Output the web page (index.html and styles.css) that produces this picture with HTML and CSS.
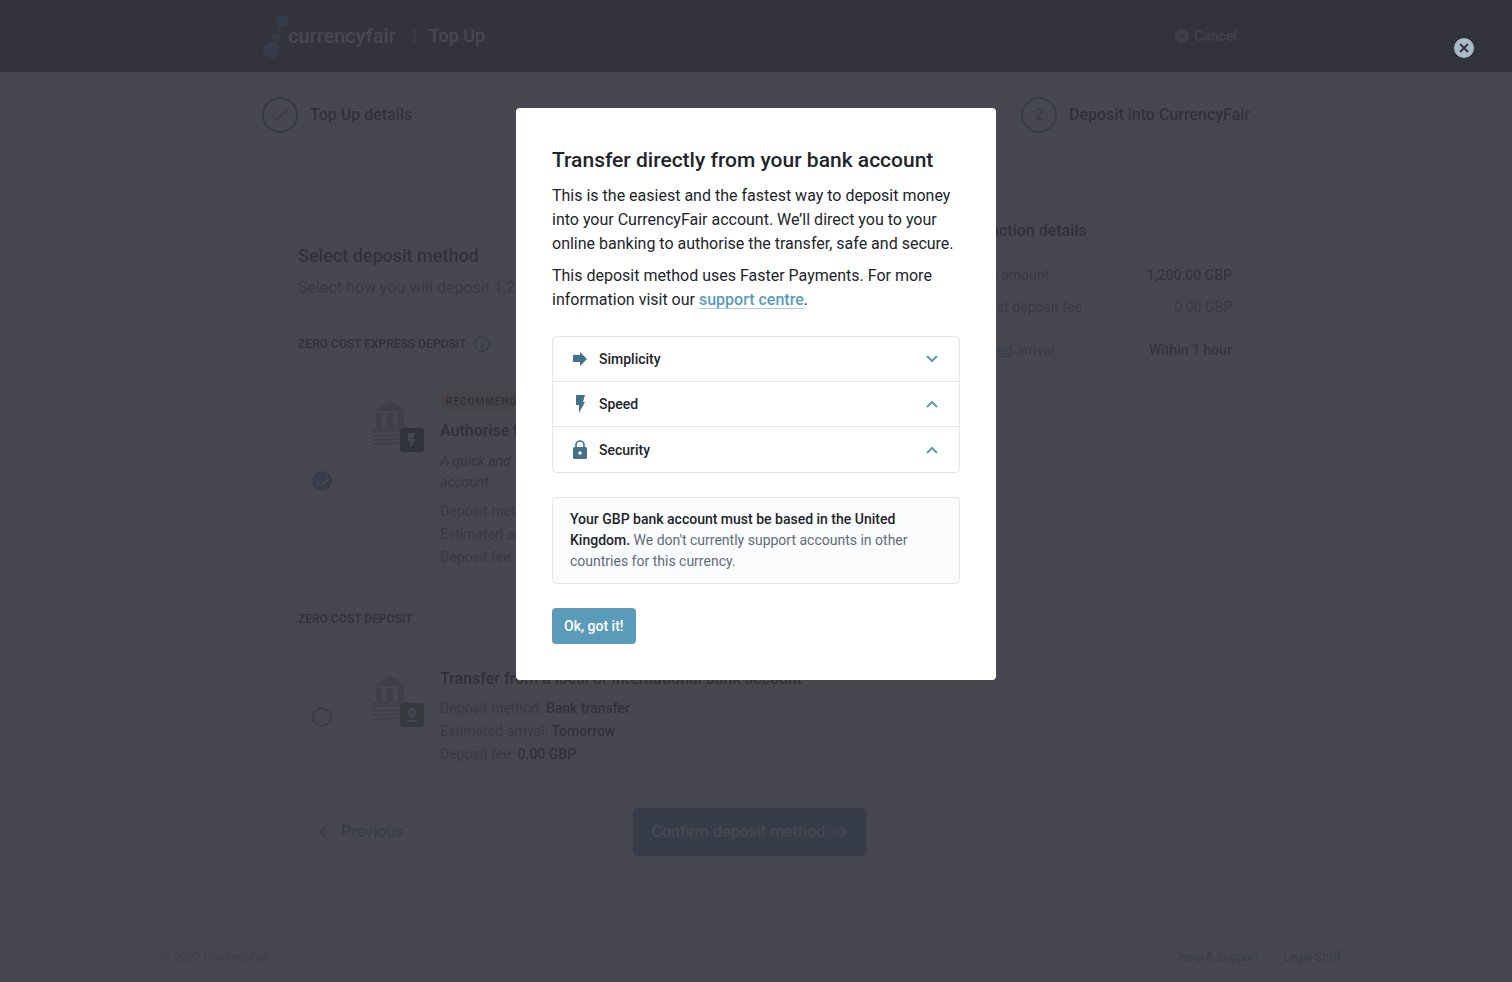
FILE: index.html
```html
<!DOCTYPE html>
<html lang="en">
<head>
<meta charset="UTF-8">
<meta name="viewport" content="width=device-width, initial-scale=1.0">
<title>Top Up - CurrencyFair</title>
<link rel="stylesheet" href="styles.css">
</head>
<body>
<div class="page">
  <!-- Top bar -->
  <header class="topbar">
    <div class="container topbar-inner">
      <a class="logo" href="#" aria-label="currencyfair">
        <svg width="26" height="46" viewBox="0 0 26 46" fill="#5b9bba">
          <circle cx="20" cy="8" r="6"/>
          <circle cx="17" cy="17" r="2"/>
          <circle cx="14" cy="24" r="4"/>
          <circle cx="9" cy="37" r="8"/>
        </svg>
        <span>currencyfair</span>
      </a>
      <span class="topbar-title">Top Up</span>
      <button class="cancel-btn" type="button">
        <svg width="14" height="14" viewBox="0 0 20 20">
          <circle cx="10" cy="10" r="10" fill="#a9bccb"/>
          <path d="M6 6l8 8M14 6l-8 8" stroke="#353841" stroke-width="2"/>
        </svg>
        Cancel
      </button>
    </div>
  </header>

  <!-- Steps -->
  <ol class="container steps">
    <li class="step step-done">
      <span class="step-mark">
        <svg width="18" height="16" viewBox="0 0 18 16" fill="none" stroke="currentColor" stroke-width="1.500"><path d="M2 9l4 4L16 2"/></svg>
      </span>
      Top Up details
    </li>
    <li class="step-line"></li>
    <li class="step"><span class="step-mark">2</span>Deposit into CurrencyFair</li>
  </ol>

  <main class="container content">
    <form class="panel">
      <h1>Select deposit method</h1>
      <p class="lead">Select how you will deposit 1,200.00 GBP</p>

      <h2>Zero cost express deposit
        <svg width="16" height="16" viewBox="0 0 16 16" fill="none" stroke="#5b9bba" stroke-width="1.500"><circle cx="8" cy="8" r="7"/><path d="M8 7v5M8 4v1.500M6.500 7H8M6 12h4"/></svg>
      </h2>
      <label class="option">
        <span class="option-pick"><input type="radio" name="method" checked></span>
        <span class="option-art">
          <svg width="60" height="60" viewBox="0 0 60 60">
            <path d="M2 2l46-1 3 55-44 3z" fill="#fff" stroke="#dfe3e6"/>
            <g fill="#9fb4c0">
              <path d="M8 18L25 8l17 10z"/>
              <path d="M11 20h6v14h-6zM22 20h6v14h-6zM33 19h6v14h-6zM8 34l34-1v2l-34 1z"/>
              <path d="M8 37l34-1v2l-34 1zM7 42l34-1v2l-34 1zM7 46l34-1v2l-34 1zM7 50l34-1v2l-34 1z"/>
            </g>
            <rect x="35" y="35" width="24" height="24" rx="3" fill="#16324a"/>
            <path d="M43 40h7l-2 6h3l-6 9v-7h-2z" fill="#dbe9f1"/>
          </svg>
        </span>
        <span class="option-text">
          <span class="badge">Recommended</span>
          <strong class="option-title">Authorise transfer from your bank account</strong>
          <em>A quick and secure way to transfer money from your bank account</em>
          <span class="meta">Deposit method: <b>Open banking</b></span>
          <span class="meta">Estimated arrival: <b>Within 1 hour</b></span>
          <span class="meta">Deposit fee: <b>0.00 GBP</b></span>
        </span>
      </label>

      <h2>Zero cost deposit</h2>
      <label class="option">
        <span class="option-pick"><input type="radio" name="method"></span>
        <span class="option-art">
          <svg width="60" height="60" viewBox="0 0 60 60">
            <path d="M2 2l46-1 3 55-44 3z" fill="#fff" stroke="#dfe3e6"/>
            <g fill="#9fb4c0">
              <path d="M8 18L25 8l17 10z"/>
              <path d="M11 20h6v14h-6zM22 20h6v14h-6zM33 19h6v14h-6zM8 34l34-1v2l-34 1z"/>
              <path d="M8 37l34-1v2l-34 1zM7 42l34-1v2l-34 1zM7 46l34-1v2l-34 1zM7 50l34-1v2l-34 1z"/>
            </g>
            <rect x="35" y="35" width="24" height="24" rx="3" fill="#2c7a4b"/>
            <path d="M47 40a4.500 4.500 0 0 0-4.500 4.500c0 3 4.500 7 4.500 7s4.500-4 4.500-7A4.500 4.500 0 0 0 47 40zm0 6a1.500 1.500 0 1 1 0-3 1.500 1.500 0 0 1 0 3zM42 52h10v2H42z" fill="#dbe9f1"/>
          </svg>
        </span>
        <span class="option-text">
          <strong class="option-title">Transfer from a local or international bank account</strong>
          <span class="meta">Deposit method: <b>Bank transfer</b></span>
          <span class="meta">Estimated arrival: <b>Tomorrow</b></span>
          <span class="meta">Deposit fee: <b>0.00 GBP</b></span>
        </span>
      </label>

      <div class="actions">
        <button class="btn-previous" type="button">
          <svg width="14" height="14" viewBox="0 0 14 14" fill="none" stroke="currentColor" stroke-width="1.500"><path d="M13 7H2M7 1L1 7l6 6"/></svg>
          Previous
        </button>
        <button class="btn-confirm" type="button">
          Confirm deposit method
          <svg width="14" height="14" viewBox="0 0 14 14" fill="none" stroke="currentColor" stroke-width="1.500"><path d="M1 7h11M7 1l6 6-6 6"/></svg>
        </button>
      </div>
    </form>

    <aside class="summary">
      <h3>Transaction details</h3>
      <dl>
        <div><dt>Deposit amount</dt><dd class="strong">1,200.00 GBP</dd></div>
        <div><dt>Zero cost deposit fee</dt><dd>0.00 GBP</dd></div>
      </dl>
      <dl>
        <div><dt><a href="#">Estimated</a> arrival</dt><dd class="strong">Within 1 hour</dd></div>
      </dl>
    </aside>
  </main>

  <footer class="footer">
    <span>© 2022 CurrencyFair</span>
    <nav><a href="#">Help &amp; Support</a><a href="#">Legal Stuff</a></nav>
  </footer>
</div>

<!-- Modal -->
<div class="overlay">
  <button class="close-btn" type="button" aria-label="Close">
    <svg width="20" height="20" viewBox="0 0 20 20">
      <circle cx="10" cy="10" r="10" fill="#a9bccb"/>
      <path d="M6 6l8 8M14 6l-8 8" stroke="#33333c" stroke-width="2"/>
    </svg>
  </button>
  <div class="modal" role="dialog" aria-labelledby="modalTitle">
    <h2 id="modalTitle">Transfer directly from your bank account</h2>
    <p>This is the easiest and the fastest way to deposit money into your CurrencyFair account. We’ll direct you to your online banking to authorise the transfer, safe and secure.</p>
    <p>This deposit method uses Faster Payments. For more information visit our <a href="#">support centre</a>.</p>

    <div class="accordion">
      <button type="button">
        <svg width="18" height="20" viewBox="0 0 18 20" fill="#44728a"><path d="M2 6h7V3l7 7-7 7v-4H2z"/></svg>
        <span>Simplicity</span>
        <svg width="12" height="8" viewBox="0 0 12 8" fill="none" stroke="#5b9bba" stroke-width="2"><path d="M1 1l5 5 5-5"/></svg>
      </button>
      <button type="button">
        <svg width="18" height="20" viewBox="0 0 18 20" fill="#44728a"><path d="M5 1h9l-2 7h2L8 19v-8H5z"/></svg>
        <span>Speed</span>
        <svg width="12" height="8" viewBox="0 0 12 8" fill="none" stroke="#5b9bba" stroke-width="2"><path d="M1 7l5-5 5 5"/></svg>
      </button>
      <button type="button">
        <svg width="18" height="20" viewBox="0 0 18 20"><path d="M5 8V5a4 4 0 0 1 8 0v3" fill="none" stroke="#44728a" stroke-width="1.600"/><rect x="2" y="7" width="14" height="12" rx="1.500" fill="#44728a"/><circle cx="9" cy="13" r="1.700" fill="#fff"/></svg>
        <span>Security</span>
        <svg width="12" height="8" viewBox="0 0 12 8" fill="none" stroke="#5b9bba" stroke-width="2"><path d="M1 7l5-5 5 5"/></svg>
      </button>
    </div>

    <div class="note"><b>Your GBP bank account must be based in the United Kingdom.</b> We don't currently support accounts in other countries for this currency.</div>

    <button class="ok-btn" type="button">Ok, got it!</button>
  </div>
</div>
</body>
</html>
```
FILE: styles.css
```css
* { box-sizing:border-box; }

body {
  margin:0;
  background:#fff;
  color:#212529;
  font-family:Roboto, "Liberation Sans", sans-serif;
  font-size:14px;
  line-height:24px;
}
h1, h2, h3, p, dl, dd, ol {
  margin:0;
  padding:0;
}
h1, h2, h3, b, strong { font-weight:500; }
button {
  font:inherit;
  font-weight:500;
  cursor:pointer;
}
svg { flex-shrink:0; }

.page {
  display:flex;
  flex-direction:column;
  min-height:100vh;
}
.container {
  width:100%;
  max-width:988px;
  margin:0 auto;
}

/* Top bar */
.topbar {
  background:#353540;
  color:#fff;
}
.topbar-inner {
  display:flex;
  align-items:center;
  height:72px;
}
.logo {
  display:flex;
  align-items:center;
  color:#fff;
  font-size:20px;
  font-weight:500;
  text-decoration:none;
}
.topbar-title {
  margin-left:18px;
  padding-left:14px;
  border-left:1px solid #ccc;
  font-size:18px;
  font-weight:500;
  line-height:16px;
}
.cancel-btn {
  display:flex;
  align-items:center;
  gap:5px;
  height:36px;
  margin-left:auto;
  padding:0 12px;
  background:none;
  border:1px solid #555560;
  border-radius:4px;
  color:#c4c7cc;
}

/* Steps */
.steps {
  display:flex;
  align-items:center;
  gap:12px;
  margin-top:25px;
  list-style:none;
  font-size:16px;
  font-weight:500;
}
.step {
  display:flex;
  align-items:center;
  gap:12px;
}
.step-mark {
  display:flex;
  align-items:center;
  justify-content:center;
  width:36px;
  height:36px;
  border:2px solid #5b9bba;
  border-radius:50%;
  color:#5b9bba;
}
.step-done .step-mark {
  border-color:#3f9075;
  color:#3f9075;
}
.step-line {
  flex:1;
  height:1px;
  margin:0 12px;
  background:#d5dadd;
}

/* Content */
.content {
  display:flex;
  align-items:flex-start;
  gap:30px;
  margin-top:74px;
}
.panel {
  flex:1;
  padding:36px 35px;
  border:1px solid #f0f2f3;
  border-radius:4px;
}
.panel h1 {
  font-size:18px;
}
.lead {
  margin:8px 0 32px;
  color:#66727c;
  font-size:16px;
}
.panel h2 {
  display:flex;
  align-items:center;
  gap:8px;
  margin-bottom:12px;
  padding-bottom:5px;
  border-bottom:1px solid #e6e9eb;
  font-size:12px;
  text-transform:uppercase;
}

.option {
  display:flex;
  margin-bottom:20px;
  border:1px solid #e2e6e8;
  border-radius:4px;
}
.option-pick {
  display:flex;
  align-items:center;
  justify-content:center;
  width:47px;
  border-right:1px solid #eceff1;
  background:#fbfcfd;
}
.option-pick input {
  appearance:none;
  width:20px;
  height:20px;
  margin:0;
  border:2px solid #87939c;
  border-radius:50%;
}
.option-pick input:checked {
  border:0;
  background:#5b9bba;
}
.option-pick input:checked::before {
  content:"";
  display:block;
  width:10px;
  height:5px;
  margin:6px 5px;
  border:solid #fff;
  border-width:0 0 2px 2px;
  transform:rotate(-45deg);
}
.option-art { padding:18px 15px 0 19px; }
.option-text {
  flex:1;
  display:flex;
  flex-direction:column;
  align-items:flex-start;
  padding:17px 36px 17px 0;
}
.badge {
  margin-bottom:8px;
  padding:0 6px;
  background:#ffd9a8;
  border-radius:10px;
  font-size:10px;
  font-weight:500;
  line-height:19px;
  letter-spacing:1px;
  text-transform:uppercase;
}
.option-title {
  margin-bottom:6px;
  font-size:16px;
}
.option em {
  margin:2px 0 7px;
  color:#495661;
  line-height:21px;
}
.meta {
  color:#66727c;
  line-height:23px;
}
.meta b { color:#212529; }

.actions {
  display:flex;
  justify-content:space-between;
  margin-top:24px;
}
.actions button {
  display:flex;
  align-items:center;
  gap:8px;
  height:48px;
  border:1px solid #dfe4e7;
  border-radius:4px;
  font-size:16px;
}
.actions .btn-previous {
  padding:0 18px 0 20px;
  background:#fff;
  color:#5b9bba;
}
.actions .btn-confirm {
  padding:0 18px;
  background:#5b9bba;
  border-color:#5b9bba;
  color:#fff;
}

/* Summary */
.summary {
  width:318px;
  border:1px solid #dfe4e7;
  border-radius:4px;
}
.summary h3 {
  padding:11px 17px 10px;
  font-size:16px;
}
.summary dl {
  padding:5px 17px;
  border-top:1px solid #dfe4e7;
}
.summary dl div {
  display:flex;
  justify-content:space-between;
  line-height:32px;
}
.summary dt, .summary dd { color:#66727c; }
.summary .strong {
  color:#3d464e;
  font-weight:500;
}
.summary a { color:#5b9bba; }

/* Footer */
.footer {
  display:flex;
  justify-content:space-between;
  width:100%;
  max-width:1214px;
  height:48px;
  margin:auto auto 0;
  padding:10px 22px 0 12px;
  border-top:1px solid #dfe4e7;
  color:#a0a8ae;
  font-size:12px;
}
.footer nav {
  display:flex;
  gap:24px;
}
.footer a {
  color:#5b9bba;
  text-decoration:none;
}

/* Modal */
.overlay {
  position:fixed;
  inset:0;
  display:flex;
  align-items:flex-start;
  justify-content:center;
  padding-top:108px;
  background:rgba(51,51,60,0.9);
}
.close-btn {
  position:absolute;
  top:38px;
  right:38px;
  display:flex;
  padding:0;
  border:0;
  background:none;
}
.modal {
  width:480px;
  padding:36px;
  background:#fff;
  border-radius:4px;
}
.modal h2 {
  margin-bottom:8px;
  font-size:21px;
  line-height:32px;
}
.modal p {
  margin-bottom:8px;
  font-size:16px;
}
.modal a {
  color:#5b9bba;
  font-weight:500;
  text-decoration-color:#a9cbdb;
  text-underline-offset:3px;
}

.accordion {
  margin:24px 0;
  border:1px solid #e3e5e7;
  border-radius:4px;
}
.accordion button {
  display:flex;
  align-items:center;
  gap:10px;
  width:100%;
  height:45px;
  padding:0 21px 0 18px;
  border:0;
  border-bottom:1px solid #e3e5e7;
  background:none;
  color:#212529;
  text-align:left;
}
.accordion button:last-child { border-bottom:0; }
.accordion span { flex:1; }

.note {
  margin-bottom:24px;
  padding:11px 17px;
  background:#fbfcfe;
  border:1px solid #e3e5e7;
  border-radius:4px;
  color:#5f6b76;
  line-height:21px;
}
.note b { color:#212529; }

.ok-btn {
  height:36px;
  padding:0 12px;
  background:#5b9bba;
  border:0;
  border-radius:4px;
  color:#fff;
}
```
